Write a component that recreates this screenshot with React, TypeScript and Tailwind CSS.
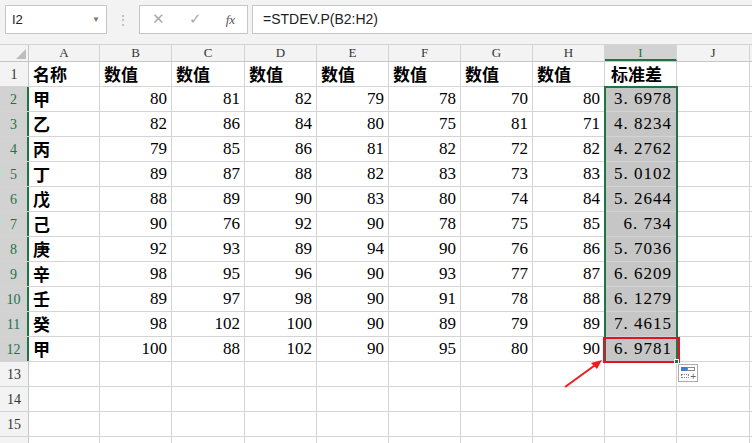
import React from "react";

const COLS = ["A", "B", "C", "D", "E", "F", "G", "H", "I", "J"];
const W = [71, 72, 73, 72, 72, 72, 72, 72, 72, 73];
const NAMES = ["甲", "乙", "丙", "丁", "戊", "己", "庚", "辛", "壬", "癸", "甲"];
const DATA = [
  [80, 81, 82, 79, 78, 70, 80, "3.6978"],
  [82, 86, 84, 80, 75, 81, 71, "4.8234"],
  [79, 85, 86, 81, 82, 72, 82, "4.2762"],
  [89, 87, 88, 82, 83, 73, 83, "5.0102"],
  [88, 89, 90, 83, 80, 74, 84, "5.2644"],
  [90, 76, 92, 90, 78, 75, 85, "6.734"],
  [92, 93, 89, 94, 90, 76, 86, "5.7036"],
  [98, 95, 96, 90, 93, 77, 87, "6.6209"],
  [89, 97, 98, 90, 91, 78, 88, "6.1279"],
  [98, 102, 100, 90, 89, 79, 89, "7.4615"],
  [100, 88, 102, 90, 95, 80, 90, "6.9781"],
];
const serif = { fontFamily: '"Liberation Serif", "Noto Sans CJK SC", serif' };
const cjk = { fontFamily: '"Noto Sans CJK SC", sans-serif' };

export default function App() {
  const rows: (string | number)[][] = [["名称", "数值", "数值", "数值", "数值", "数值", "数值", "数值", "标准差", ""]];
  DATA.forEach((d, i) => rows.push([NAMES[i], ...d, ""]));
  for (let i = 0; i < 4; i++) rows.push(Array(10).fill(""));

  return (
    <div className="w-[752px] h-[443px] overflow-hidden bg-white relative" style={{ fontFamily: '"Liberation Sans", sans-serif' }}>
      {/* formula bar */}
      <div className="h-[45px] bg-[#f3f3f3] flex items-start pt-[5px] pl-[5px] gap-0 border-b border-[#d4d4d4]">
        <div className="w-[102px] h-[29px] bg-white border border-[#c6c6c6] flex items-center justify-between px-[6px] text-[13px] text-[#222]">
          <span>I2</span>
          <span className="text-[8px] text-[#777]">▼</span>
        </div>
        <div className="w-[32px] h-[29px] flex items-center justify-center text-[#aaa] text-[12px]">⋮</div>
        <div className="w-[109px] h-[29px] bg-white border border-[#c6c6c6] flex items-center justify-around text-[#aaa] text-[15px]">
          <span>✕</span><span>✓</span><span className="italic text-[#555] text-[13px]" style={serif}>fx</span>
        </div>
        <div className="flex-1 h-[29px] bg-white border border-[#c6c6c6] border-r-0 ml-[4px] flex items-center px-[10px] text-[14px] text-[#222]">=STDEV.P(B2:H2)</div>
      </div>
      {/* column header */}
      <div className="flex h-[17px] bg-[#f3f3f3] border-b border-[#c6c6c6]">
        <div className="w-[29px] shrink-0 border-r border-[#c6c6c6] relative">
          <div className="absolute right-[2px] bottom-[2px] w-0 h-0 border-l-[10px] border-l-transparent border-b-[10px] border-b-[#bdbdbd]" />
        </div>
        {COLS.map((c, i) => (
          <div key={c} style={{ width: W[i], ...serif }}
            className={`shrink-0 border-r border-[#d4d4d4] text-center text-[13px] leading-[16px] ${c === "I" ? "bg-[#d2d2d2] text-[#217346] border-b-2 border-b-[#217346]" : "text-[#333]"}`}>{c}</div>
        ))}
      </div>
      {rows.map((r, ri) => (
        <div key={ri} className="flex h-[25px] border-b border-[#d4d4d4]">
          <div style={serif} className={`w-[29px] shrink-0 border-r flex items-end justify-center pb-[1px] text-[14px] ${ri >= 1 && ri <= 11 ? "bg-[#d2d2d2] text-[#217346] border-r-2 border-r-[#217346]" : "bg-[#f3f3f3] text-[#333] border-[#c6c6c6]"}`}>{ri + 1}</div>
          {r.map((v, ci) => {
            const sel = ci === 8 && ri >= 1 && ri <= 11;
            const left = ci === 0 || ri === 0;
            return (
              <div key={ci} style={{ width: W[ci], ...(left ? cjk : serif) }}
                className={`shrink-0 border-r border-[#d4d4d4] flex items-center px-[4px] text-black ${left ? "justify-start text-[17px] font-bold" : "justify-end text-[17px]"} ${sel ? "bg-[#c6c6c6]" : ""} ${ri === 0 && ci === 8 ? "pl-[6px]" : ""}`}>
                {sel ? <span style={{ ...serif, letterSpacing: "1px" }}>{String(v).replace(".", ". ")}</span> : v}
              </div>
            );
          })}
        </div>
      ))}
      {/* selection outline */}
      <div className="absolute left-[604px] top-[86px] w-[74px] h-[277px] border-2 border-[#217346] pointer-events-none" />
      <div className="absolute left-[603px] top-[337px] w-[77px] h-[26px] border-2 border-[#e81123] pointer-events-none" />
      <div className="absolute left-[674px] top-[359px] w-[5px] h-[5px] bg-[#217346] border border-white" />
      {/* quick analysis icon */}
      <div className="absolute left-[678px] top-[364px] w-[20px] h-[18px] border border-[#aaa] bg-white">
        <div className="absolute left-[2px] top-[2px] w-[6px] h-[4px] bg-[#3a7ce0]" />
        <div className="absolute left-[8px] top-[2px] w-[8px] h-[4px] border border-[#888]" />
        <div className="absolute left-[2px] top-[9px] w-[8px] h-[4px] border border-dotted border-[#888]" />
        <span className="absolute right-[1px] bottom-[-3px] text-[10px] text-[#666]">+</span>
      </div>
      {/* red arrow */}
      <svg className="absolute left-[560px] top-[356px]" width="48" height="36" viewBox="0 0 48 36">
        <line x1="5" y1="31" x2="38" y2="7" stroke="#ee1c1c" strokeWidth="2" />
        <polygon points="42,4 31,7 37,13" fill="#ee1c1c" />
      </svg>
    </div>
  );
}
